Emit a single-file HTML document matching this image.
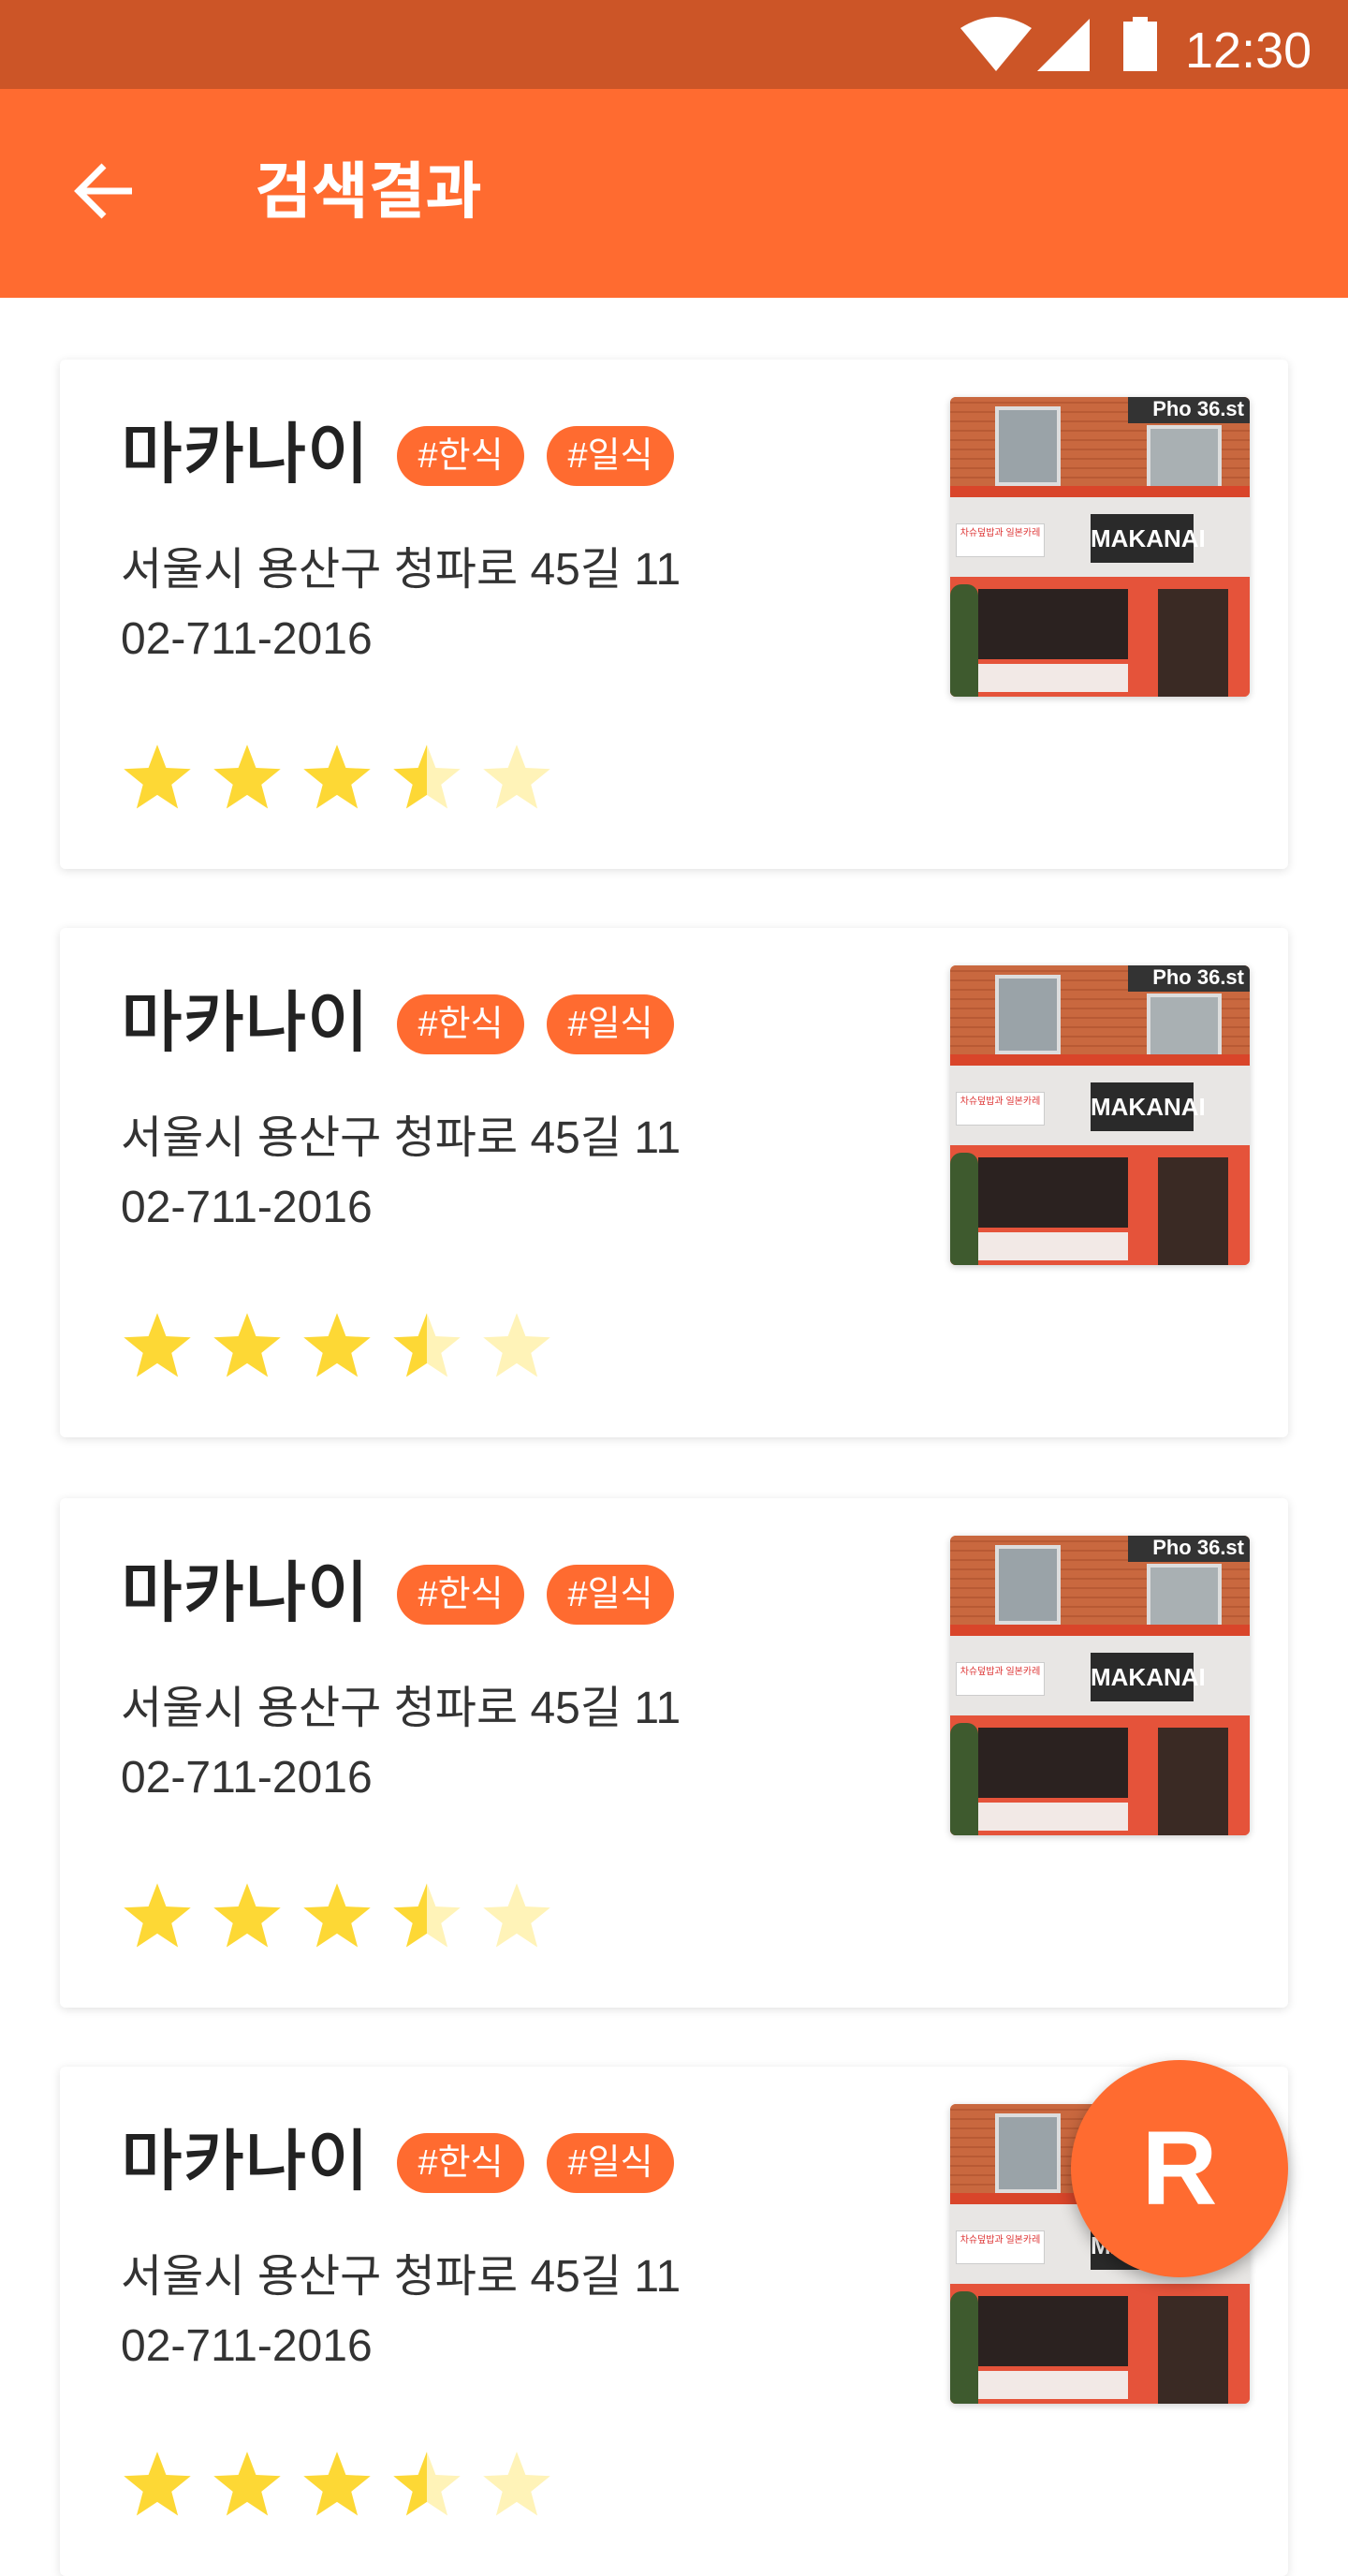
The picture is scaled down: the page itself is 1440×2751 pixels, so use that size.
<!DOCTYPE html>
<html><head><meta charset="utf-8"><style>
*{margin:0;padding:0;box-sizing:border-box}
body{width:1440px;height:2560px;overflow:hidden;background:#fff;font-family:"Liberation Sans","Noto Sans CJK KR",sans-serif;position:relative}
.sb{position:absolute;left:0;top:0;width:1440px;height:95px;background:#CC5527}
.ab{position:absolute;left:0;top:95px;width:1440px;height:223px;background:#FF6B30}
.ab .t{position:absolute;left:272px;top:65px;line-height:88px;font-size:66px;font-weight:bold;color:#fff}
.time{position:absolute;left:1266px;top:22px;font-size:54px;color:#fff;line-height:64px}
.card{position:absolute;left:64px;width:1312px;height:544px;background:#fff;border-radius:6px;box-shadow:0 2px 10px rgba(0,0,0,.12)}
.name{position:absolute;left:65px;top:52px;font-size:72px;color:#222;font-weight:500;line-height:100px}
.tag{position:absolute;top:71px;height:64px;width:136px;border-radius:32px;background:#FF6B30;color:#fff;font-size:38px;line-height:64px;text-align:center}
.addr{position:absolute;left:65px;font-size:48px;color:#333;line-height:60px}
.stars{position:absolute;left:65px;top:408px}
.img{position:absolute;left:951px;top:40px;width:320px;height:320px;border-radius:6px;overflow:hidden;box-shadow:0 2px 8px rgba(0,0,0,.2);background:#E5683A}
.fab{position:absolute;left:1144px;top:2200px;width:232px;height:232px;border-radius:50%;background:#FF6B30;box-shadow:0 6px 16px rgba(0,0,0,.3);color:#fff;font-size:112px;font-weight:bold;text-align:center;line-height:232px}
</style></head><body>
<div class="sb">
<svg style="position:absolute;left:1026px;top:18px" width="76" height="58" viewBox="0 0 76 58"><path d="M0 12 Q38 -12 76 12 L38 58 Z" fill="#fff"/></svg>
<svg style="position:absolute;left:1108px;top:20px" width="56" height="56"><path d="M56 0 L56 56 L0 56 Z" fill="#fff"/></svg>
<svg style="position:absolute;left:1200px;top:18px" width="36" height="58"><rect x="10" y="0" width="16" height="6" fill="#fff"/><rect x="0" y="5" width="36" height="53" fill="#fff"/></svg>
<div class="time">12:30</div>
</div>
<div class="ab">
<svg style="position:absolute;left:78px;top:76px" width="66" height="66" viewBox="0 0 66 66"><path d="M63 33 H8 M33 6 L6 33 L33 60" stroke="#fff" stroke-width="7" fill="none"/></svg>
<div class="t">검색결과</div>
</div>

<div id="cards"></div>
<script>
var star=function(f){var id='g'+Math.random().toString(36).slice(2);return '<svg width="78" height="78" viewBox="0 0 24 24" style="margin-right:18px"><defs><linearGradient id="'+id+'"><stop offset="'+f+'" stop-color="#FDD835"/><stop offset="'+f+'" stop-color="#FFF3B8"/></linearGradient></defs><path d="M12 1 L14.9 8.6 L23 9 L16.7 14.1 L18.8 22 L12 17.5 L5.2 22 L7.3 14.1 L1 9 L9.1 8.6 Z" fill="url(#'+id+')"/></svg>';};
var img='<div style="position:absolute;left:0;top:0;width:320px;height:95px;background:repeating-linear-gradient(0deg,#C9683F 0 8px,#B85A34 8px 10px)"></div>'+
'<div style="position:absolute;left:48px;top:10px;width:70px;height:85px;background:#9AA3A8;border:4px solid #ddd"></div>'+
'<div style="position:absolute;left:210px;top:30px;width:80px;height:70px;background:#A9B0B3;border:4px solid #ddd"></div>'+
'<div style="position:absolute;left:190px;top:0;width:130px;height:28px;background:#333;color:#fff;font-size:22px;font-weight:bold;text-align:right;padding-right:6px">Pho 36.st</div>'+
'<div style="position:absolute;left:0;top:95px;width:320px;height:12px;background:#D9452A"></div>'+
'<div style="position:absolute;left:0;top:107px;width:320px;height:85px;background:#E8E6E4"></div>'+
'<div style="position:absolute;left:6px;top:135px;width:95px;height:36px;background:#fff;border:1px solid #ccc;font-size:10px;color:#d33;text-align:center">차슈덮밥과 일본카레</div>'+
'<div style="position:absolute;left:150px;top:125px;width:110px;height:52px;background:#2A2A2A;color:#fff;font-size:26px;font-weight:bold;line-height:52px;text-align:center">MAKANAI</div>'+
'<div style="position:absolute;left:0;top:192px;width:320px;height:128px;background:#E5533A"></div>'+
'<div style="position:absolute;left:30px;top:205px;width:160px;height:75px;background:#2B2220"></div>'+
'<div style="position:absolute;left:222px;top:205px;width:75px;height:115px;background:#3A2A24"></div>'+
'<div style="position:absolute;left:30px;top:285px;width:160px;height:30px;background:#F2E9E6"></div>'+
'<div style="position:absolute;left:0;top:200px;width:30px;height:120px;background:#3E5A2E;border-radius:12px 12px 0 0"></div>';
var h='';var tops=[384,991,1600,2207];
tops.forEach(function(t){h+='<div class="card" style="top:'+t+'px"><div class="name">마카나이</div><div class="tag" style="left:360px">#한식</div><div class="tag" style="left:520px">#일식</div><div class="addr" style="top:195px">서울시 용산구 청파로 45길 11</div><div class="addr" style="top:269px">02-711-2016</div><div class="stars">'+star(1)+star(1)+star(1)+star(0.5)+star(0)+'</div><div class="img">'+img+'</div></div>';});
document.getElementById('cards').innerHTML=h;
</script>
<div class="fab">R</div>
</body></html>
